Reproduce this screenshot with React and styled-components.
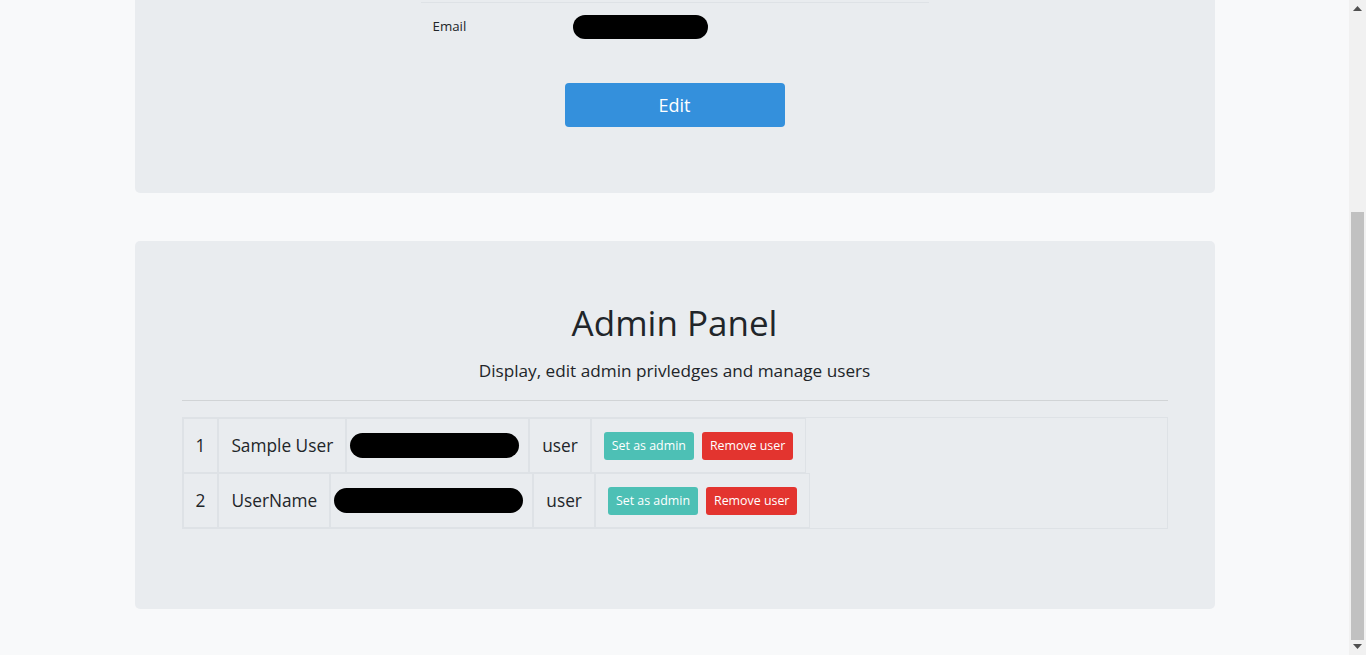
import React, { useLayoutEffect, useRef } from 'react'
import styled, { createGlobalStyle } from 'styled-components'

const GlobalStyle = createGlobalStyle`
  * { box-sizing: border-box; }
  html, body { margin: 0; height: 100%; }
  body {
    background: #f8f9fa;
    font-family: 'Open Sans', sans-serif;
    font-size: 14.4px;
    line-height: 1.6;
    color: #212529;
  }
`

const Shell = styled.div`
  display: flex;
  height: 100vh;
`

const Viewport = styled.div`
  flex: 1;
  overflow: hidden;
`

// window scrollbar (the page is scrolled to its bottom)
const ScrollTrack = styled.div`
  width: 17px;
  flex: none;
  background: #f1f1f1;
  display: flex;
  flex-direction: column;
  align-items: center;
`

const ScrollArrow = styled.div`
  height: 17px;
  display: flex;
  align-items: center;
  justify-content: center;
`

const ScrollThumb = styled.div`
  width: 13px;
  height: 428px;
  margin-top: auto;
  margin-bottom: -2px;
  background: #c1c1c1;
`

const Container = styled.div`
  width: 1080px;
  margin: 0 auto;
  padding: 24px 0 46px;
  display: flex;
  flex-direction: column;
  gap: 48px;
`

const Jumbotron = styled.section`
  background: #e9ecef;
  border-radius: 5px;
  padding: 61px 47px 66px;
  display: flex;
  flex-direction: column;
  align-items: center;
`

const Title = styled.h1`
  margin: 0;
  font-size: 35px;
  font-weight: 400;
  line-height: 1.2;
`

const Lead = styled.p`
  margin: 13px 0 0;
  font-size: 17.2px;
  font-weight: 400;
`

const Rule = styled.hr`
  align-self: stretch;
  margin: 16px 0;
  border: 0;
  border-top: 1px solid rgba(0, 0, 0, 0.1);
`

const ProfileTable = styled.div`
  width: 508px;
  display: flex;
  flex-direction: column;
  font-size: 13.3px;
`

const ProfileRow = styled.div`
  display: grid;
  grid-template-columns: 140px 1fr;
  align-items: center;
  padding: 12px;
  line-height: 23px;
  border-top: 1px solid #dee2e6;
`

const Redacted = styled.div`
  width: ${p => p.w}px;
  height: ${p => p.h || 24}px;
  margin: ${p => p.m || 0};
  background: #000;
  border-radius: 13px;
`

const EditButton = styled.button`
  margin-top: 32px;
  width: 220px;
  height: 44px;
  border: 0;
  border-radius: 4px;
  background: #3490dc;
  color: #fff;
  font-family: inherit;
  font-size: 18px;
`

const UserTable = styled.div`
  align-self: stretch;
  margin-bottom: 14px;
  border: 1px solid #dee2e6;
  display: flex;
  flex-direction: column;
`

const UserRow = styled.div`
  display: flex;
  align-items: stretch;
`

const Cell = styled.div`
  display: flex;
  align-items: center;
  padding: 12px;
  border: 1px solid #dee2e6;
  font-size: 17.3px;
  line-height: 29px;
`

const ActionCell = styled(Cell)`
  gap: 8px;
`

const SmallButton = styled.button`
  border: 0;
  border-radius: 3px;
  padding: 4px 8px;
  font-family: inherit;
  font-size: 12.4px;
  line-height: 20px;
  color: #fff;
  background: ${p => (p.danger ? '#e3342f' : '#4dc0b5')};
`

const users = [
  { id: 1, name: 'Sample User', blob: 169, role: 'user' },
  { id: 2, name: 'UserName', blob: 189, role: 'user' },
]

const Arrow = ({ down }) => (
  <svg width="9" height="5" viewBox="0 0 9 5">
    <polygon points={down ? '0,0 9,0 4.5,5' : '0,5 9,5 4.5,0'} fill="#505050" />
  </svg>
)

export default function App() {
  const ref = useRef(null)
  useLayoutEffect(() => {
    if (ref.current) ref.current.scrollTop = ref.current.scrollHeight
  }, [])

  return (
    <Shell>
      <GlobalStyle />
      <Viewport ref={ref}>
        <Container>
          <Jumbotron>
            <Title>Profile</Title>
            <Lead>View and edit your account details</Lead>
            <Rule />
            <ProfileTable>
              <ProfileRow>
                <span>Name</span>
                <Redacted w={120} />
              </ProfileRow>
              <ProfileRow>
                <span>Email</span>
                <Redacted w={135} />
              </ProfileRow>
            </ProfileTable>
            <EditButton>Edit</EditButton>
          </Jumbotron>

          <Jumbotron>
            <Title>Admin Panel</Title>
            <Lead>Display, edit admin privledges and manage users</Lead>
            <Rule />
            <UserTable>
              {users.map(u => (
                <UserRow key={u.id}>
                  <Cell>{u.id}</Cell>
                  <Cell>{u.name}</Cell>
                  <Cell>
                    <Redacted w={u.blob} h={25} m="0 -3px 0 -9px" />
                  </Cell>
                  <Cell>{u.role}</Cell>
                  <ActionCell>
                    <SmallButton>Set as admin</SmallButton>
                    <SmallButton danger>Remove user</SmallButton>
                  </ActionCell>
                </UserRow>
              ))}
            </UserTable>
          </Jumbotron>
        </Container>
      </Viewport>
      <ScrollTrack>
        <ScrollArrow><Arrow /></ScrollArrow>
        <ScrollThumb />
        <ScrollArrow><Arrow down /></ScrollArrow>
      </ScrollTrack>
    </Shell>
  )
}
